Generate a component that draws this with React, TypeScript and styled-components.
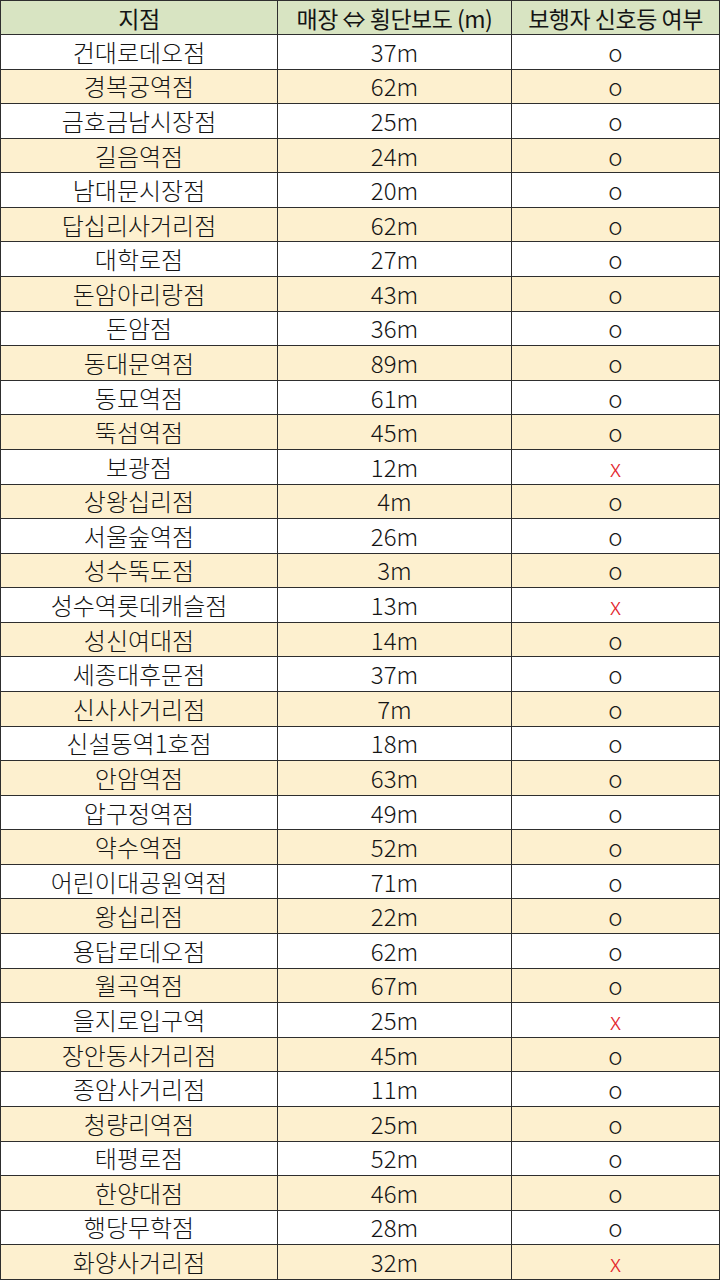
import React from 'react';
import styled, { createGlobalStyle } from 'styled-components';

type Store = { name: string; distance: number; signal: boolean };

const stores: Store[] = [
  { name: '건대로데오점', distance: 37, signal: true },
  { name: '경복궁역점', distance: 62, signal: true },
  { name: '금호금남시장점', distance: 25, signal: true },
  { name: '길음역점', distance: 24, signal: true },
  { name: '남대문시장점', distance: 20, signal: true },
  { name: '답십리사거리점', distance: 62, signal: true },
  { name: '대학로점', distance: 27, signal: true },
  { name: '돈암아리랑점', distance: 43, signal: true },
  { name: '돈암점', distance: 36, signal: true },
  { name: '동대문역점', distance: 89, signal: true },
  { name: '동묘역점', distance: 61, signal: true },
  { name: '뚝섬역점', distance: 45, signal: true },
  { name: '보광점', distance: 12, signal: false },
  { name: '상왕십리점', distance: 4, signal: true },
  { name: '서울숲역점', distance: 26, signal: true },
  { name: '성수뚝도점', distance: 3, signal: true },
  { name: '성수역롯데캐슬점', distance: 13, signal: false },
  { name: '성신여대점', distance: 14, signal: true },
  { name: '세종대후문점', distance: 37, signal: true },
  { name: '신사사거리점', distance: 7, signal: true },
  { name: '신설동역1호점', distance: 18, signal: true },
  { name: '안암역점', distance: 63, signal: true },
  { name: '압구정역점', distance: 49, signal: true },
  { name: '약수역점', distance: 52, signal: true },
  { name: '어린이대공원역점', distance: 71, signal: true },
  { name: '왕십리점', distance: 22, signal: true },
  { name: '용답로데오점', distance: 62, signal: true },
  { name: '월곡역점', distance: 67, signal: true },
  { name: '을지로입구역', distance: 25, signal: false },
  { name: '장안동사거리점', distance: 45, signal: true },
  { name: '종암사거리점', distance: 11, signal: true },
  { name: '청량리역점', distance: 25, signal: true },
  { name: '태평로점', distance: 52, signal: true },
  { name: '한양대점', distance: 46, signal: true },
  { name: '행당무학점', distance: 28, signal: true },
  { name: '화양사거리점', distance: 32, signal: false },
];

const GlobalStyle = createGlobalStyle`
  html, body {
    margin: 0;
    padding: 0;
    background: #ffffff;
  }
  body {
    font-family: "Noto Sans CJK KR", "Noto Sans", sans-serif;
    color: #141414;
  }
`;

const Table = styled.table`
  width: 720px;
  height: 1280px;
  border-collapse: collapse;
  table-layout: fixed;
`;

const HeadRow = styled.tr`
  background: #d8e4c2;
  height: 34px;
`;

const HeadCell = styled.th`
  border: 1px solid #2e2e2e;
  font-weight: 400;
  font-size: 23px;
  letter-spacing: -0.5px;
  line-height: 20px;
  padding: 0;
  text-align: center;
  overflow: hidden;
`;

const Row = styled.tr<{ $shaded: boolean }>`
  background: ${p => (p.$shaded ? '#fdf0cf' : '#ffffff')};
  height: 34px;
`;

const Cell = styled.td`
  border: 1px solid #2e2e2e;
  font-size: 24px;
  font-weight: 300;
  line-height: 20px;
  padding: 0;
  text-align: center;
  overflow: hidden;
`;

const Mark = styled.span<{ $ok: boolean }>`
  color: ${p => (p.$ok ? '#1a1a1a' : '#e3242b')};
  font-size: 24px;
`;

const App: React.FC = () => {
  return (
    <>
      <GlobalStyle />
      <Table>
        <colgroup>
          <col style={{ width: 277 }} />
          <col style={{ width: 234 }} />
          <col />
        </colgroup>
        <thead>
          <HeadRow>
            <HeadCell>지점</HeadCell>
            <HeadCell>매장 ⇔ 횡단보도 (m)</HeadCell>
            <HeadCell>보행자 신호등 여부</HeadCell>
          </HeadRow>
        </thead>
        <tbody>
          {stores.map((s, i) => (
            <Row key={s.name} $shaded={i % 2 === 1}>
              <Cell>{s.name}</Cell>
              <Cell>{s.distance}m</Cell>
              <Cell>
                <Mark $ok={s.signal}>{s.signal ? 'o' : 'x'}</Mark>
              </Cell>
            </Row>
          ))}
        </tbody>
      </Table>
    </>
  );
};

export default App;
